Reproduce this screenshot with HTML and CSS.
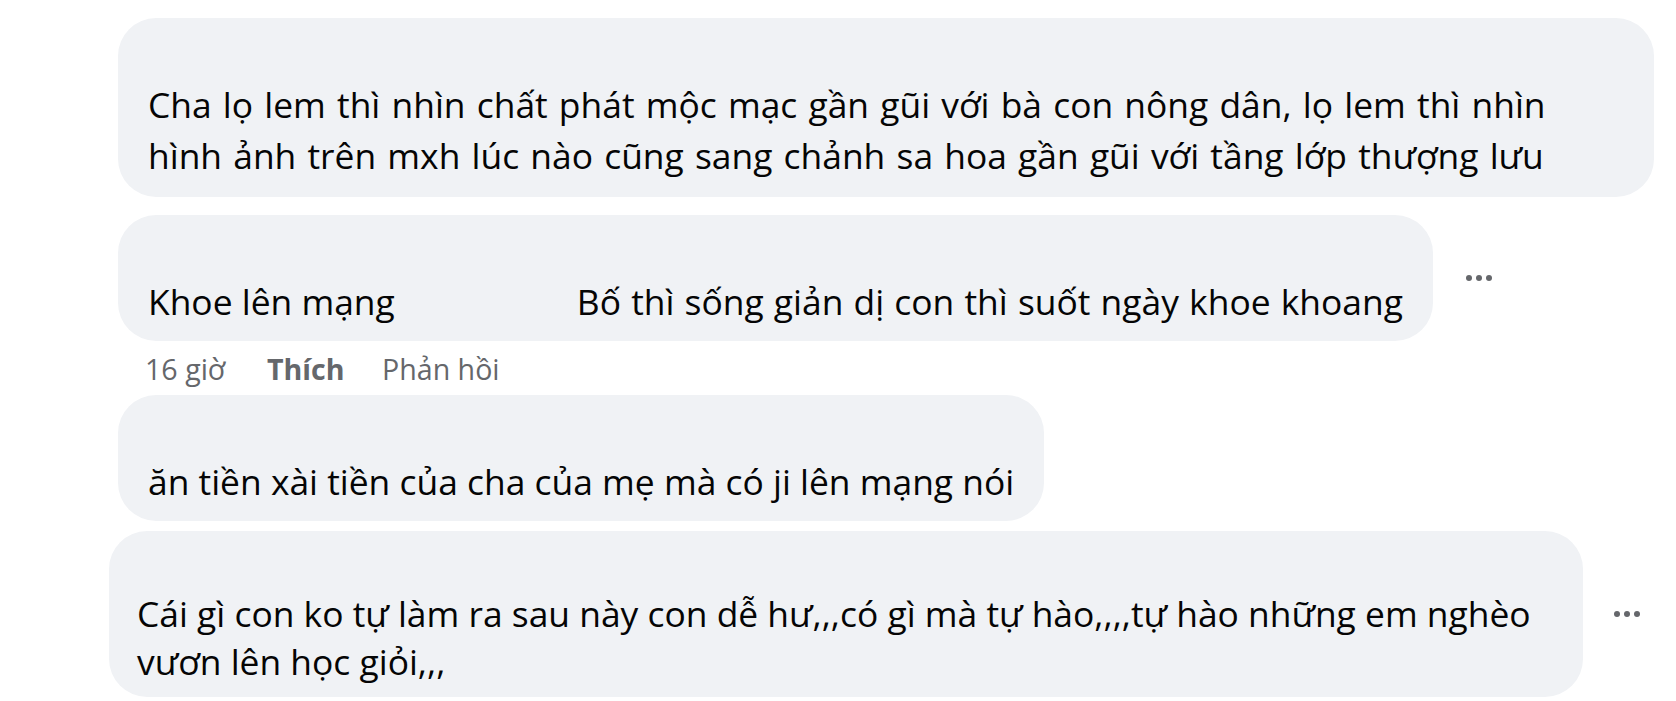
FILE: index.html
```html
<!DOCTYPE html>
<html lang="vi">
<head>
<meta charset="utf-8">
<title>Bình luận</title>
<link rel="stylesheet" href="styles.css">
</head>
<body>
<div class="thread">
  <div class="row">
    <div class="bubble bubble-wide">
      <p class="text">Cha lọ lem thì nhìn chất phát mộc mạc gần gũi với bà con nông dân, lọ lem thì nhìn<br>hình ảnh trên mxh lúc nào cũng sang chảnh sa hoa gần gũi với tầng lớp thượng lưu</p>
    </div>
  </div>

  <div class="row row-second">
    <div class="bubble bubble-single">
      <p class="text"><span>Khoe lên mạng</span><span class="spaced">Bố thì sống giản dị con thì suốt ngày khoe khoang</span></p>
    </div>
    <div class="more" aria-label="Tùy chọn"><i></i><i></i><i></i></div>
  </div>

  <div class="meta">
    <span class="time">16 giờ</span>
    <span class="like">Thích</span>
    <span class="reply">Phản hồi</span>
  </div>

  <div class="row">
    <div class="bubble bubble-single">
      <p class="text">ăn tiền xài tiền của cha của mẹ mà có ji lên mạng nói</p>
    </div>
  </div>

  <div class="row row-last">
    <div class="bubble bubble-last">
      <p class="text">Cái gì con ko tự làm ra sau này con dễ hư,,,có gì mà tự hào,,,,tự hào những em nghèo<br>vươn lên học giỏi,,,</p>
    </div>
    <div class="more" aria-label="Tùy chọn"><i></i><i></i><i></i></div>
  </div>
</div>
</body>
</html>
```

FILE: styles.css
```css
html, body {
  margin: 0;
  padding: 0;
  background: #ffffff;
}

body {
  font-family: "Open Sans", "Noto Sans", "DejaVu Sans", sans-serif;
  color: #050505;
  width: 1676px;
  height: 701px;
  overflow: hidden;
}

.thread {
  display: flex;
  flex-direction: column;
  padding: 18px 0 0 118px;
}

.row {
  display: flex;
  align-items: center;
  gap: 33px;
}

.row-second {
  margin-top: 18px;
}

.row-last {
  margin-top: 10px;
  margin-left: -9px;
  gap: 31px;
}

.bubble {
  background: #f0f2f5;
  border-radius: 38px;
  box-sizing: border-box;
}

.text {
  margin: 0;
  font-size: 35.4px;
  line-height: 51px;
  white-space: nowrap;
}

.bubble-wide {
  width: 1536px;
  padding: 61px 40px 16px 30px;
}

.bubble-wide .text {
  word-spacing: 2px;
}

.bubble-single {
  padding: 61px 30px 14px 30px;
}

.bubble-last {
  width: 1474px;
  padding: 58px 40px 12px 28px;
}

.bubble-last .text {
  line-height: 48px;
}

.spaced {
  margin-left: 182px;
  word-spacing: 1px;
}

.more {
  display: flex;
  gap: 4px;
  width: 28px;
}

.more i {
  display: block;
  width: 6px;
  height: 6px;
  border-radius: 50%;
  background: #65676b;
}

.meta {
  display: flex;
  align-items: center;
  padding-left: 27px;
  height: 54px;
  font-size: 28.6px;
  color: #65676b;
}

.time {
  width: 122px;
}

.like {
  font-weight: 700;
  width: 115px;
}
```
